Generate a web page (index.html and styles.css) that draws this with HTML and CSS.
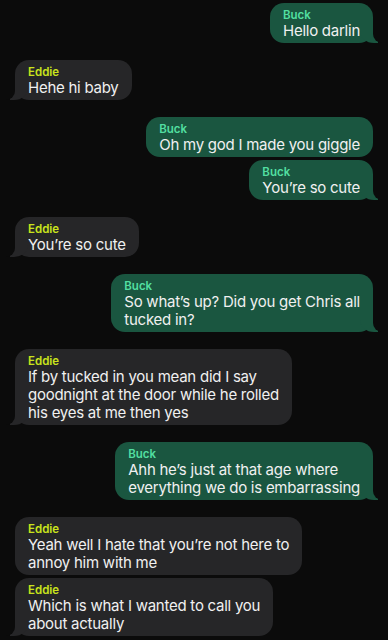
FILE: index.html
```html
<!DOCTYPE html>
<html lang="en">

<head>
    <meta charset="UTF-8">
    <meta name="viewport" content="width=device-width, initial-scale=1.0">
    <title>Buck &amp; Eddie</title>
    <link rel="stylesheet" href="styles.css">
</head>

<body>
    <div class="chat">
        <div class="msg buck tail">
            <div class="name">Buck</div>
            <div class="text">Hello darlin</div>
        </div>

        <div class="msg eddie tail">
            <div class="name">Eddie</div>
            <div class="text">Hehe hi baby</div>
        </div>

        <div class="msg buck">
            <div class="name">Buck</div>
            <div class="text">Oh my god I made you giggle</div>
        </div>
        <div class="msg buck tail same">
            <div class="name">Buck</div>
            <div class="text">You’re so cute</div>
        </div>

        <div class="msg eddie tail">
            <div class="name">Eddie</div>
            <div class="text">You’re so cute</div>
        </div>

        <div class="msg buck tail">
            <div class="name">Buck</div>
            <div class="text">So what’s up? Did you get Chris all<br>tucked in?</div>
        </div>

        <div class="msg eddie tail">
            <div class="name">Eddie</div>
            <div class="text">If by tucked in you mean did I say<br>goodnight at the door while he rolled<br>his eyes at me then yes</div>
        </div>

        <div class="msg buck tail">
            <div class="name">Buck</div>
            <div class="text">Ahh he’s just at that age where<br>everything we do is embarrassing</div>
        </div>

        <div class="msg eddie">
            <div class="name">Eddie</div>
            <div class="text">Yeah well I hate that you’re not here to<br>annoy him with me</div>
        </div>
        <div class="msg eddie tail same">
            <div class="name">Eddie</div>
            <div class="text">Which is what I wanted to call you<br>about actually</div>
        </div>
    </div>
</body>

</html>
```

FILE: styles.css
```css
body {
    margin: 0;
    background: #0b0b0b;
    font-family: Inter, "Noto Sans", sans-serif;
    color: #f0f0f0;
}

.chat {
    display: flex;
    flex-direction: column;
    padding: 3px 15px;
}

.msg {
    position: relative;
    max-width: 300px;
    padding: 5.5px 13px 3px 13px;
    border-radius: 14px;
    margin-top: 17.5px;
}

.msg:first-child {
    margin-top: 0;
}

.msg.same {
    margin-top: 3.5px;
}

.buck {
    align-self: flex-end;
    background: #1a5640;
}

.eddie {
    align-self: flex-start;
    background: #262628;
}

.name {
    font-size: 11.5px;
    font-weight: 600;
    line-height: 13px;
}

.buck .name {
    color: #52dfa1;
}

.eddie .name {
    color: #c9e31c;
}

.text {
    font-size: 15px;
    line-height: 18px;
    letter-spacing: -0.25px;
    white-space: nowrap;
}

/* bubble tails */
.tail::before,
.tail::after {
    content: "";
    position: absolute;
    bottom: 0;
    height: 18px;
}

.buck.tail::before {
    right: -5px;
    width: 18px;
    background: #1a5640;
    border-bottom-left-radius: 14px 12px;
}

.buck.tail::after {
    right: -22px;
    width: 22px;
    background: #0b0b0b;
    border-bottom-left-radius: 9px;
}

.eddie.tail::before {
    left: -5px;
    width: 18px;
    background: #262628;
    border-bottom-right-radius: 14px 12px;
}

.eddie.tail::after {
    left: -22px;
    width: 22px;
    background: #0b0b0b;
    border-bottom-right-radius: 9px;
}
```
